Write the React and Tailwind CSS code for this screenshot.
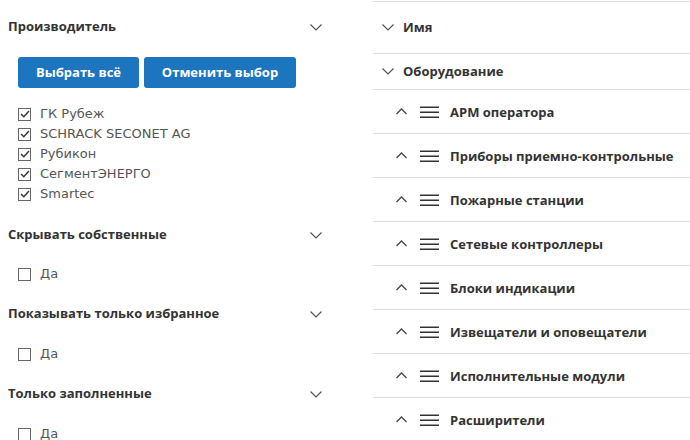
import React from 'react';

const font = { fontFamily: '"DejaVu Sans", "Noto Sans", sans-serif' };
const boldFont = { fontFamily: '"Open Sans", "Noto Sans", sans-serif' };

const ChevronDown = ({ className = '' }) => (
  <svg width="12" height="7" viewBox="0 0 12 7" className={className}>
    <polyline points="0.5,0.5 6,6 11.5,0.5" fill="none" stroke="#555" strokeWidth="1.2" />
  </svg>
);

const ChevronUp = () => (
  <svg width="11" height="7" viewBox="0 0 11 7">
    <polyline points="0.5,6 5.5,1 10.5,6" fill="none" stroke="#444" strokeWidth="1.3" />
  </svg>
);

const MenuIcon = () => (
  <svg width="19" height="13" viewBox="0 0 19 13">
    <rect x="0" y="0.5" width="19" height="1.5" fill="#333" />
    <rect x="0" y="5.5" width="19" height="1.5" fill="#333" />
    <rect x="0" y="10.5" width="19" height="1.5" fill="#333" />
  </svg>
);

const Checkbox = ({ checked }) => (
  <span className="w-[13px] h-[13px] border border-[#666] bg-white flex items-center justify-center shrink-0">
    {checked && (
      <svg width="10" height="8" viewBox="0 0 10 8">
        <polyline points="1,4 3.8,6.8 9,1" fill="none" stroke="#333" strokeWidth="1.4" />
      </svg>
    )}
  </span>
);

const CheckRow = ({ label, checked }) => (
  <div className="h-[20px] flex items-center pl-[18px]">
    <Checkbox checked={checked} />
    <span className="ml-[9px] text-[13px] text-[#555]">{label}</span>
  </div>
);

const FilterHeader = ({ title, className = '' }) => (
  <div className={`h-[40px] flex items-center justify-between pl-2 pr-[18px] ${className}`}>
    <span className="text-[13px] font-bold text-[#333]" style={boldFont}>{title}</span>
    <ChevronDown />
  </div>
);

const manufacturers = ['ГК Рубеж', 'SCHRACK SECONET AG', 'Рубикон', 'СегментЭНЕРГО', 'Smartec'];

const equipment = [
  'АРМ оператора',
  'Приборы приемно-контрольные',
  'Пожарные станции',
  'Сетевые контроллеры',
  'Блоки индикации',
  'Извещатели и оповещатели',
  'Исполнительные модули',
  'Расширители',
];

export default function App() {
  return (
    <div className="w-[690px] h-[440px] overflow-hidden bg-white flex" style={font}>
      {/* Filters */}
      <div className="w-[340px] shrink-0 pt-[7px]">
        <FilterHeader title="Производитель" />
        <div className="mt-[10px] flex gap-[5px] pl-[18px]" style={boldFont}>
          <button className="h-[31px] w-[121px] rounded-[3px] bg-[#1d74bf] text-white text-[13px] font-bold">
            Выбрать всё
          </button>
          <button className="h-[31px] w-[152px] rounded-[3px] bg-[#1d74bf] text-white text-[13px] font-bold">
            Отменить выбор
          </button>
        </div>
        <div className="mt-[16px]">
          {manufacturers.map((m) => (
            <CheckRow key={m} label={m} checked />
          ))}
        </div>
        <FilterHeader title="Скрывать собственные" className="mt-[11px]" />
        <div className="mt-[9px]">
          <CheckRow label="Да" />
        </div>
        <FilterHeader title="Показывать только избранное" className="mt-[10px]" />
        <div className="mt-[10px]">
          <CheckRow label="Да" />
        </div>
        <FilterHeader title="Только заполненные" className="mt-[10px]" />
        <div className="mt-[10px]">
          <CheckRow label="Да" />
        </div>
      </div>

      {/* Columns tree */}
      <div className="flex-1 pl-[33px] pt-[1px]" style={boldFont}>
        <div className="border-t border-[#ddd]">
          <div className="h-[52px] flex items-center border-b border-[#ddd] pl-[9px]">
            <ChevronDown />
            <span className="ml-[9px] text-[13px] font-bold text-[#333]">Имя</span>
          </div>
          <div className="h-[36px] flex items-center border-b border-[#ddd] pl-[9px]">
            <ChevronDown />
            <span className="ml-[9px] text-[13px] font-bold text-[#333]">Оборудование</span>
          </div>
          {equipment.map((e) => (
            <div key={e} className="h-[44px] flex items-center border-b border-[#ddd] pl-[23px]">
              <ChevronUp />
              <span className="ml-[13px] pt-[2px]">
                <MenuIcon />
              </span>
              <span className="ml-[11px] pt-[2px] text-[13px] font-bold text-[#333] whitespace-nowrap">{e}</span>
            </div>
          ))}
        </div>
      </div>
    </div>
  );
}
